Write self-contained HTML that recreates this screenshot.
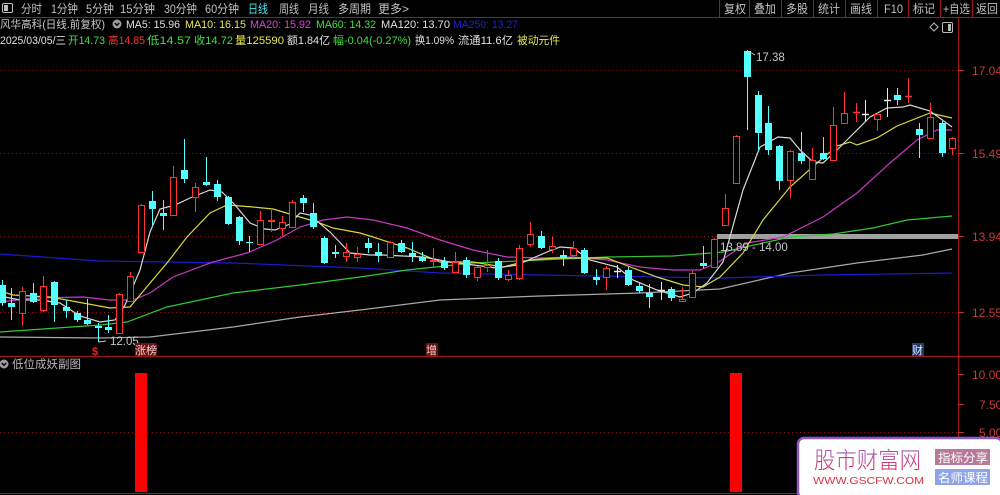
<!DOCTYPE html>
<html><head><meta charset="utf-8">
<style>
html,body{margin:0;padding:0;background:#000;width:1000px;height:495px;overflow:hidden}
svg{display:block}
text{font-family:"Liberation Sans","Noto Sans CJK SC",sans-serif}
</style></head><body>
<svg id="s" width="1000" height="495" viewBox="0 0 1000 495" xmlns="http://www.w3.org/2000/svg">
<rect width="1000" height="495" fill="#000"/>
<line x1="0" y1="17.5" x2="1000" y2="17.5" stroke="#a01818"/>
<rect x="2.5" y="3.5" width="10" height="9" fill="none" stroke="#bbb" rx="1.5"/><rect x="4" y="5" width="4" height="6" fill="#bbb"/>
<g font-size="12" fill="#c0c0c0">
<text x="21" y="13" textLength="21" lengthAdjust="spacingAndGlyphs">分时</text><text x="51" y="13" textLength="27" lengthAdjust="spacingAndGlyphs">1分钟</text><text x="86" y="13" textLength="28" lengthAdjust="spacingAndGlyphs">5分钟</text><text x="120" y="13" textLength="35" lengthAdjust="spacingAndGlyphs">15分钟</text><text x="164" y="13" textLength="33" lengthAdjust="spacingAndGlyphs">30分钟</text><text x="205" y="13" textLength="34" lengthAdjust="spacingAndGlyphs">60分钟</text><text x="248" y="13" fill="#4ee8f0" textLength="20" lengthAdjust="spacingAndGlyphs">日线</text><text x="279" y="13" textLength="20" lengthAdjust="spacingAndGlyphs">周线</text><text x="308" y="13" textLength="21" lengthAdjust="spacingAndGlyphs">月线</text><text x="338" y="13" textLength="33" lengthAdjust="spacingAndGlyphs">多周期</text><text x="378" y="13" textLength="31" lengthAdjust="spacingAndGlyphs">更多&gt;</text>
</g>
<g stroke="#a01818"><line x1="719.5" y1="0" x2="719.5" y2="17"/><line x1="749.5" y1="0" x2="749.5" y2="17"/><line x1="781.5" y1="0" x2="781.5" y2="17"/><line x1="813.5" y1="0" x2="813.5" y2="17"/><line x1="845.5" y1="0" x2="845.5" y2="17"/><line x1="877.5" y1="0" x2="877.5" y2="17"/><line x1="908.5" y1="0" x2="908.5" y2="17"/><line x1="940.5" y1="0" x2="940.5" y2="17"/><line x1="972.5" y1="0" x2="972.5" y2="17"/></g>
<g font-size="12" fill="#c0c0c0">
<text x="724" y="13" textLength="22" lengthAdjust="spacingAndGlyphs">复权</text><text x="754" y="13" textLength="22" lengthAdjust="spacingAndGlyphs">叠加</text><text x="786" y="13" textLength="22" lengthAdjust="spacingAndGlyphs">多股</text><text x="818" y="13" textLength="22" lengthAdjust="spacingAndGlyphs">统计</text><text x="850" y="13" textLength="22" lengthAdjust="spacingAndGlyphs">画线</text><text x="884" y="13" textLength="19" lengthAdjust="spacingAndGlyphs">F10</text><text x="913" y="13" textLength="22" lengthAdjust="spacingAndGlyphs">标记</text><text x="943" y="13" textLength="27" lengthAdjust="spacingAndGlyphs">+自选</text><text x="976" y="13" textLength="22" lengthAdjust="spacingAndGlyphs">返回</text>
</g>
<g font-size="11">
<text x="0" y="28" fill="#c8c8c8" textLength="105" lengthAdjust="spacingAndGlyphs">风华高科(日线.前复权)</text>
<circle cx="117" cy="24" r="4.5" fill="#9a9a9a"/><path d="M114.8 23 L117 25.3 L119.2 23" stroke="#000" stroke-width="1.3" fill="none"/>
<text x="126" y="28" fill="#e0e0e0" textLength="54" lengthAdjust="spacingAndGlyphs">MA5: 15.96</text>
<text x="185" y="28" fill="#e8e850" textLength="61" lengthAdjust="spacingAndGlyphs">MA10: 16.15</text>
<text x="250" y="28" fill="#e040e0" textLength="61" lengthAdjust="spacingAndGlyphs">MA20: 15.92</text>
<text x="316" y="28" fill="#40e040" textLength="60" lengthAdjust="spacingAndGlyphs">MA60: 14.32</text>
<text x="381" y="28" fill="#e0e0e0" textLength="69" lengthAdjust="spacingAndGlyphs">MA120: 13.70</text>
<text x="453" y="28" fill="#2020d0" textLength="65" lengthAdjust="spacingAndGlyphs">MA250: 13.27</text>
<text x="0" y="44" fill="#e0e0e0" textLength="66" lengthAdjust="spacingAndGlyphs">2025/03/05/三</text>
<text x="68" y="44" fill="#40e040" textLength="37" lengthAdjust="spacingAndGlyphs">开14.73</text>
<text x="108" y="44" fill="#ff3030" textLength="37" lengthAdjust="spacingAndGlyphs">高14.85</text>
<text x="147" y="44" fill="#40e040" textLength="44" lengthAdjust="spacingAndGlyphs">低14.57</text>
<text x="194" y="44" fill="#40e040" textLength="39" lengthAdjust="spacingAndGlyphs">收14.72</text>
<text x="235" y="44" fill="#e8e850" textLength="49" lengthAdjust="spacingAndGlyphs">量125590</text>
<text x="287" y="44" fill="#e0e0e0" textLength="43" lengthAdjust="spacingAndGlyphs">额1.84亿</text>
<text x="333" y="44" fill="#40e040" textLength="78" lengthAdjust="spacingAndGlyphs">幅-0.04(-0.27%)</text>
<text x="415" y="44" fill="#e0e0e0" textLength="39" lengthAdjust="spacingAndGlyphs">换1.09%</text>
<text x="458" y="44" fill="#e0e0e0" textLength="55" lengthAdjust="spacingAndGlyphs">流通11.6亿</text>
<text x="517" y="44" fill="#e8e850" textLength="43" lengthAdjust="spacingAndGlyphs">被动元件</text>
</g>
<path d="M934 23 L938 27 L934 31 L930 27 Z" fill="none" stroke="#bbb"/>
<rect x="942.5" y="22.5" width="10" height="10" fill="none" stroke="#bbb" rx="1.5"/><rect x="948" y="24" width="3" height="7" fill="#bbb"/>
<line x1="958.5" y1="17" x2="958.5" y2="495" stroke="#a01818"/>
<line x1="0" y1="356.5" x2="1000" y2="356.5" stroke="#a01818"/>
<line x1="0" y1="493.5" x2="1000" y2="493.5" stroke="#a01818"/>
<g stroke="#8a1a1a" stroke-dasharray="1,3"><line x1="0" y1="70.5" x2="958" y2="70.5"/><line x1="0" y1="153.5" x2="958" y2="153.5"/><line x1="0" y1="236.5" x2="958" y2="236.5"/><line x1="0" y1="312.5" x2="958" y2="312.5"/><line x1="0" y1="432.5" x2="958" y2="432.5"/></g>
<g stroke="#c03030"><line x1="958" y1="70.5" x2="964" y2="70.5"/><line x1="958" y1="153.5" x2="964" y2="153.5"/><line x1="958" y1="236.5" x2="964" y2="236.5"/><line x1="958" y1="312.5" x2="964" y2="312.5"/><line x1="958" y1="374.5" x2="964" y2="374.5"/><line x1="958" y1="404.5" x2="964" y2="404.5"/><line x1="958" y1="432.5" x2="964" y2="432.5"/></g>
<g font-size="12" fill="#c83838">
<text x="972" y="75">17.04</text><text x="972" y="158">15.49</text><text x="972" y="241">13.94</text><text x="972" y="317">12.55</text>
<text x="972" y="379">10.00</text><text x="979" y="409">7.50</text><text x="979" y="437">5.00</text>
</g>
<rect x="717" y="234" width="241" height="5" fill="#a0a0a0"/>
<g id="ma" fill="none" stroke-width="1.2"></g>
<g id="cd"></g>
<text x="720" y="251" font-size="11.5" fill="#c8c8c8">13.89 - 14.00</text>
<text x="756" y="61" font-size="11.5" fill="#c8c8c8">17.38</text>
<path d="M750 52 L755 55" stroke="#c8c8c8"/>
<text x="110" y="345" font-size="11.5" fill="#c8c8c8">12.05</text>
<path d="M98 342 L106 341" stroke="#c8c8c8"/>
<text x="92" y="355" font-size="11" fill="#ff2020" font-weight="bold">$</text>
<rect x="135" y="343" width="22" height="13" fill="#6a1010"/>
<text x="135" y="354" font-size="11" fill="#f0d0d0">涨榜</text>
<rect x="426" y="343" width="12" height="13" fill="#6a1010"/>
<text x="426" y="354" font-size="11" fill="#f0d0d0">增</text>
<rect x="912" y="343" width="12" height="13" fill="#203a6a"/>
<text x="912" y="354" font-size="11" fill="#e0e8ff">财</text>
<circle cx="4" cy="364" r="4.5" fill="#9a9a9a"/><path d="M1.8 363 L4 365.3 L6.2 363" stroke="#000" stroke-width="1.3" fill="none"/>
<text x="12" y="368" font-size="11.5" fill="#b8b8b8">低位成妖副图</text>
<rect x="135" y="373" width="12" height="119" fill="#ff0000"/>
<rect x="730" y="373" width="12" height="119" fill="#ff0000"/>
<rect x="798" y="438" width="204" height="60" rx="6" fill="#fff" stroke="#8a5ac8" stroke-width="2.5"/>
<defs><linearGradient id="g1" x1="0" y1="0" x2="0" y2="1"><stop offset="0" stop-color="#9a60d0"/><stop offset="1" stop-color="#e02040"/></linearGradient></defs>
<text x="814" y="468" font-size="23" fill="url(#g1)" font-family="'Noto Sans CJK SC',sans-serif" font-weight="300" textLength="107" lengthAdjust="spacingAndGlyphs">股市财富网</text>
<text x="813" y="484" font-size="10.5" fill="#e03040" font-family="'Liberation Serif',serif" textLength="111" lengthAdjust="spacingAndGlyphs">WWW.GSCFW.COM</text>
<rect x="935" y="449" width="55" height="16" fill="#b87a9a"/>
<text x="938" y="462" font-size="12" fill="#fff" textLength="50" lengthAdjust="spacingAndGlyphs">指标分享</text>
<rect x="935" y="469" width="55" height="16" fill="#8ea4e6"/>
<text x="938" y="482" font-size="12" fill="#fff" textLength="50" lengthAdjust="spacingAndGlyphs">名师课程</text>
</svg>
<script>
var NS="http://www.w3.org/2000/svg";
function el(p,t,a){var e=document.createElementNS(NS,t);for(var k in a)e.setAttribute(k,a[k]);p.appendChild(e);return e;}
var ma=document.getElementById('ma');
var L={
"#a8a8a8":[[0,337],[100,338],[150,337],[233,327],[300,317],[360,310],[440,300],[540,296],[640,293],[720,289],[790,273],[857,263],[923,255],[952,249]],
"#1a1ad0":[[0,254],[100,261],[233,263],[360,268],[440,273],[540,275],[720,278],[823,275],[952,273]],
"#30c830":[[0,332],[100,325],[127,322],[167,307],[233,293],[300,285],[360,277],[407,270],[473,263],[540,260],[607,257],[673,256],[723,252],[790,237],[833,234],[873,228],[907,220],[952,216]],
"#c838c8":[[0,302],[33,298],[83,297],[110,300],[133,300],[150,293],[173,277],[213,262],[247,253],[277,240],[300,227],[323,220],[347,217],[373,220],[407,228],[440,240],[473,250],[507,257],[540,258],[573,257],[607,260],[640,267],[673,270],[700,270],[717,263],[747,243],[783,237],[823,217],[857,193],[890,163],[917,140],[937,130],[952,130]],
"#d8d840":[[0,291],[13,295],[50,297],[83,303],[110,308],[130,307],[150,283],[167,263],[187,237],[210,213],[227,205],[253,207],[273,209],[293,215],[317,222],[333,228],[360,233],[373,237],[407,248],[440,262],[473,262],[503,267],[530,260],[557,258],[607,258],[633,268],[657,277],[683,285],[703,287],[720,277],[743,253],[763,220],[790,187],[817,163],[837,146],[850,142],[857,145],[877,138],[897,126],[930,113],[952,118]],
"#d8d8d8":[[0,296],[20,300],[40,300],[60,303],[80,316],[100,322],[115,320],[125,305],[140,270],[150,232],[160,209],[175,205],[190,198],[210,190],[222,192],[235,205],[250,223],[265,229],[275,230],[290,224],[300,213],[310,215],[330,232],[350,253],[370,255],[383,255],[423,257],[450,262],[497,268],[517,265],[533,258],[547,252],[560,247],[573,248],[590,260],[617,267],[633,280],[657,290],[680,297],[693,293],[707,283],[723,262],[743,190],[760,147],[778,137],[790,138],[800,150],[813,162],[823,163],[837,150],[850,137],[870,117],[887,108],[903,107],[910,105],[930,111],[952,127]]
};
for(var c in L){el(ma,'polyline',{points:L[c].map(function(p){return p.join(',')}).join(' '),stroke:c});}
var C=[[2,285,303,280,306,'c'],[11,303,307,288,320,'c'],[22,291,313,287,326,'r'],[33,293,302,283,303,'c'],[43,286,310,276,312,'r'],[54,282,305,281,322,'c'],[66,307,311,300,318,'c'],[77,313,320,311,322,'c'],[87,320,324,299,325,'c'],[98,326,328,323,342,'c'],[108,327,330,315,333,'c'],[119,294,333,293,334,'r'],[130,276,301,272,302,'r'],[141,205,252,204,253,'r'],[152,201,209,191,225,'c'],[163,213,216,200,230,'c'],[173,177,215,166,216,'r'],[184,170,179,139,183,'c'],[195,187,197,183,212,'r'],[206,182,185,157,186,'c'],[217,184,197,180,201,'c'],[228,197,224,196,225,'c'],[239,217,241,216,245,'c'],[249,242,243,236,252,'c'],[260,220,244,211,245,'r'],[271,220,221,210,232,'r'],[282,222,228,216,236,'r'],[292,202,227,200,228,'r'],[303,198,203,195,212,'c'],[313,213,227,203,229,'c'],[324,238,263,236,264,'c'],[335,252,254,245,258,'c'],[346,252,256,243,262,'r'],[357,254,257,247,262,'r'],[368,243,248,238,253,'c'],[378,252,256,243,262,'c'],[390,242,257,241,258,'r'],[401,243,252,240,253,'c'],[412,253,256,242,262,'c'],[422,257,261,252,262,'c'],[433,260,261,248,268,'r'],[444,261,268,257,270,'c'],[455,262,272,252,273,'r'],[466,260,275,257,278,'c'],[477,267,277,266,281,'r'],[487,265,267,250,272,'r'],[498,261,278,258,280,'c'],[508,275,279,270,281,'r'],[519,248,278,245,280,'r'],[530,234,244,222,247,'r'],[541,236,248,231,249,'c'],[552,246,249,237,253,'r'],[563,255,258,250,266,'c'],[573,248,255,241,258,'r'],[584,250,273,248,274,'c'],[596,277,280,269,285,'c'],[606,268,277,266,290,'r'],[617,271,272,265,278,'w'],[628,270,285,267,286,'c'],[639,286,291,283,293,'c'],[649,293,297,284,308,'c'],[661,290,291,282,300,'w'],[671,289,298,287,301,'c'],[682,299,301,287,302,'r'],[692,273,297,271,298,'r'],[703,263,266,246,268,'c'],[714,239,267,238,268,'r'],[725,208,225,194,226,'r'],[736,136,183,135,184,'r'],[747,51,77,50,130,'c'],[758,95,133,91,152,'c'],[768,123,150,106,155,'c'],[779,146,181,145,190,'c'],[790,151,180,150,198,'r'],[801,153,161,132,164,'c'],[812,160,179,148,180,'r'],[823,153,159,137,160,'c'],[833,125,160,107,161,'r'],[844,113,123,92,124,'r'],[856,112,113,103,122,'rx'],[865,114,115,100,122,'w'],[877,114,119,112,131,'r'],[887,100,101,88,117,'w'],[897,95,100,88,105,'c'],[908,96,97,78,103,'rx'],[919,129,135,123,158,'c'],[930,117,138,103,139,'r'],[942,123,153,121,157,'c'],[952,138,148,137,155,'r']];
var cd=document.getElementById('cd');
C.forEach(function(d){var x=d[0],t=d[1],b=d[2],col=(d[5]=='c')?'#54ffff':(d[5]=='w'?'#e8e8e8':'#ff3232');
el(cd,'line',{x1:x+.5,y1:d[3],x2:x+.5,y2:d[4],stroke:col});
if(d[5]=='c')el(cd,'rect',{x:x-3,y:t,width:7,height:Math.max(1,b-t),fill:col});
else if(d[5]=='r')el(cd,'rect',{x:x-2.5,y:t+.5,width:6,height:Math.max(1,b-t),fill:'#000',stroke:col});
else el(cd,'line',{x1:x-3,y1:t+.5,x2:x+4,y2:t+.5,stroke:col,'stroke-width':1.5});
});
</script>
</body></html>
